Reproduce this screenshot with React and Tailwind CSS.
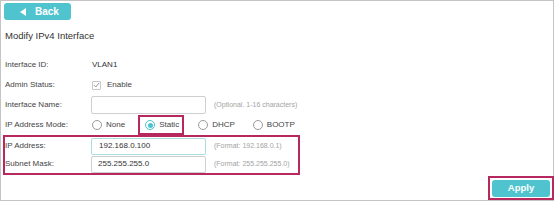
import React from 'react';

const HINT = 'whitespace-nowrap text-[7px] text-[#a3a3a3]';
const LABEL = 'whitespace-nowrap text-[8px] text-[#444]';

function Row({ label, children }) {
  return (
    <div className="flex items-center h-[20px]">
      <div className={`w-[90px] shrink-0 pl-[4px] ${LABEL}`}>{label}</div>
      <div className="flex items-center">{children}</div>
    </div>
  );
}

function Radio({ label, checked }) {
  return (
    <div className="flex items-center gap-[4px]">
      <span
        className={`w-[10px] h-[10px] rounded-full border flex items-center justify-center ${
          checked ? 'border-[#4cc2cd]' : 'border-[#9a9a9a]'
        }`}
      >
        {checked && <span className="w-[5px] h-[5px] rounded-full bg-[#4cc2cd]" />}
      </span>
      <span className="whitespace-nowrap text-[8px] text-[#444]">{label}</span>
    </div>
  );
}

export default function App() {
  return (
    <div className="w-[556px] h-[202px] bg-white font-['Liberation_Sans',Arial,sans-serif]">
      <div className="w-[554px] h-[201px] border border-[#c4c4c4] flex flex-col">
        {/* Back button */}
        <div className="pt-[2px] pl-[3px]">
          <button className="w-[67px] h-[17px] rounded-[3px] bg-[#4fc4cf] flex items-center pl-[16px] gap-[9px] text-white text-[10px] font-bold leading-none">
            <svg width="6" height="8" viewBox="0 0 6 8">
              <path d="M6 0 L0 4 L6 8 Z" fill="white" />
            </svg>
            Back
          </button>
        </div>

        {/* Title */}
        <div className="pl-[4px] mt-[9px] h-[14px] whitespace-nowrap text-[9.5px] leading-[14px] text-[#333]">
          Modify IPv4 Interface
        </div>
        <div className="mt-[4px] h-[2px] w-[551px] bg-[#dcdcdc]" />

        {/* Form */}
        <div className="mt-[8px] flex flex-col">
          <Row label="Interface ID:">
            <span className="ml-[1px] text-[8px] text-[#333]">VLAN1</span>
          </Row>
          <Row label="Admin Status:">
            <span className="ml-[1px] w-[9px] h-[9px] border border-[#c8c8c8] rounded-[1px] flex items-center justify-center">
              <svg width="7" height="6" viewBox="0 0 7 6">
                <path d="M0.8 3 L2.8 5 L6.2 0.8" stroke="#9a9a9a" strokeWidth="1" fill="none" />
              </svg>
            </span>
            <span className={`ml-[6px] ${LABEL}`}>Enable</span>
          </Row>
          <Row label="Interface Name:">
            <div className="w-[115px] h-[18px] border border-[#cfcfcf] rounded-[2px]" />
            <span className={`ml-[8px] ${HINT}`}>(Optional. 1-16 characters)</span>
          </Row>
          <Row label="IP Address Mode:">
            <div className="flex items-center h-[20px]">
              <div className="ml-[1px]">
                <Radio label="None" />
              </div>
              <div className="ml-[13px] h-[20px] w-[46px] border-2 border-[#b7285e] flex items-center pl-[5px]">
                <Radio label="Static" checked />
              </div>
              <div className="ml-[14px]">
                <Radio label="DHCP" />
              </div>
              <div className="ml-[18px]">
                <Radio label="BOOTP" />
              </div>
            </div>
          </Row>

          <div className="ml-[2px] w-[297px] border-2 border-[#b7285e] flex flex-col">
            <div className="flex items-center h-[18px]">
              <div className={`w-[86px] shrink-0 ${LABEL}`}>IP Address:</div>
              <div className="w-[115px] h-[17px] border border-[#a9dde2] rounded-[2px] flex items-center pl-[7px] text-[8px] text-[#333]">
                192.168.0.100
              </div>
              <span className={`ml-[8px] ${HINT}`}>(Format: 192.168.0.1)</span>
            </div>
            <div className="flex items-center h-[18px]">
              <div className={`w-[86px] shrink-0 ${LABEL}`}>Subnet Mask:</div>
              <div className="w-[115px] h-[17px] border border-[#cfcfcf] rounded-[2px] flex items-center pl-[6px] text-[8px] text-[#333]">
                255.255.255.0
              </div>
              <span className={`ml-[8px] ${HINT}`}>(Format: 255.255.255.0)</span>
            </div>
          </div>

          <div className="flex justify-end mt-[1px] -mr-[1px]">
            <div className="w-[66px] h-[24px] border-2 border-[#b7285e] flex items-center justify-center">
              <button className="w-[58px] h-[17px] rounded-[3px] bg-[#4fc4cf] text-white text-[9.5px] font-bold leading-none">
                Apply
              </button>
            </div>
          </div>
        </div>
      </div>
    </div>
  );
}
